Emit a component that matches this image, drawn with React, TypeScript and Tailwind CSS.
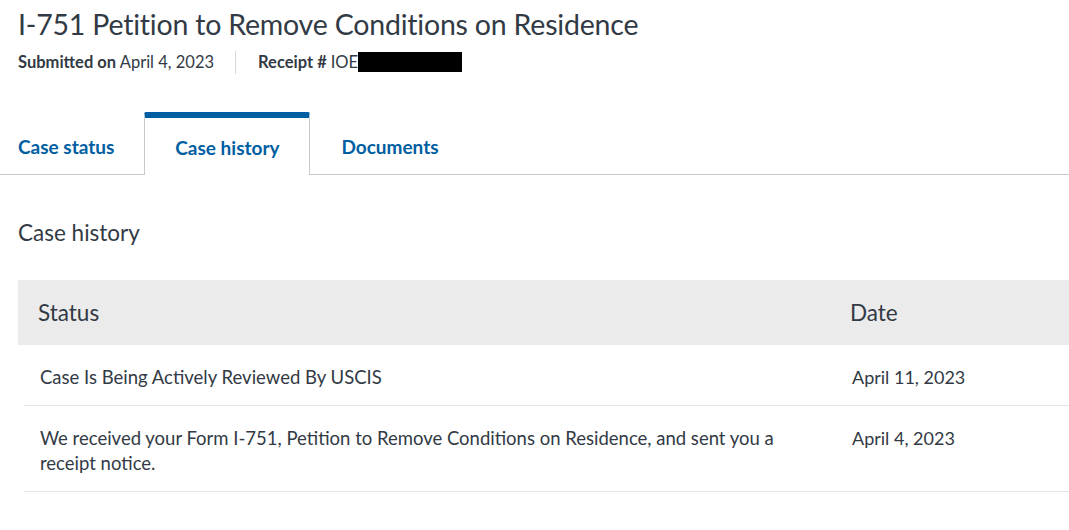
import React from "react";

const tabs = [
    { label: "Case status", active: false },
    { label: "Case history", active: true },
    { label: "Documents", active: false },
];

const history = [
    { status: "Case Is Being Actively Reviewed By USCIS", date: "April 11, 2023" },
    {
        status:
            "We received your Form I-751, Petition to Remove Conditions on Residence, and sent you a receipt notice.",
        date: "April 4, 2023",
    },
];

export default function App() {
    return (
        <div className="min-h-[530px] w-full bg-white font-['Lato','Open_Sans',sans-serif] text-[#323a45]">
            {/* Header */}
            <div className="px-[18px] pt-[4px]">
                <h1 className="text-[28.5px] leading-[40px] tracking-[-0.2px]">
                    I-751 Petition to Remove Conditions on Residence
                </h1>
                <div className="mt-[6px] flex items-center text-[16.5px]">
                    <span>
                        <span className="font-bold">Submitted on</span> April 4, 2023
                    </span>
                    <span className="ml-[21px] mr-[22px] h-[23px] w-px bg-[#d6d7d9]" />
                    <span className="flex items-center">
                        <span className="font-bold">Receipt #</span>
                        <span className="ml-[4px]">IOE</span>
                        <span className="h-[20px] w-[104px] bg-black" />
                    </span>
                </div>
            </div>

            {/* Tabs */}
            <div className="mt-[37px] flex items-end border-b border-[#c9c9c9]">
                {tabs.map((tab) =>
                    tab.active ? (
                        <div
                            key={tab.label}
                            className="-mb-px flex h-[63px] w-[166px] items-center justify-center rounded-t-[2px] border-x border-t-[6px] border-x-[#c9c9c9] border-t-[#005ea2] bg-white pt-[3px] text-[19px] font-bold text-[#005ea2]"
                        >
                            {tab.label}
                        </div>
                    ) : (
                        <div
                            key={tab.label}
                            className="flex h-[57px] items-center px-[18px] pt-[3px] text-[19px] font-bold text-[#005ea2] first:pr-[30px] last:pl-[31px]"
                        >
                            {tab.label}
                        </div>
                    )
                )}
            </div>

            {/* Case history */}
            <div className="pl-[18px]">
                <h2 className="mt-[44px] text-[22.5px] leading-[28px]">Case history</h2>

                <div className="mt-[33px]">
                    <div className="flex h-[65px] items-center bg-[#ebebeb] pt-[2px] text-[22.5px]">
                        <div className="w-[832px] pl-[20px]">Status</div>
                        <div>Date</div>
                    </div>
                    {history.map((row) => (
                        <div
                            key={row.date}
                            className="ml-[6px] flex border-b border-[#e4e4e4] pt-[20px] pb-[15px] text-[18.5px] leading-[25px]"
                        >
                            <div className="w-[828px] pl-[16px] pr-[40px]">{row.status}</div>
                            <div className="text-[18px]">{row.date}</div>
                        </div>
                    ))}
                </div>
            </div>
        </div>
    );
}
